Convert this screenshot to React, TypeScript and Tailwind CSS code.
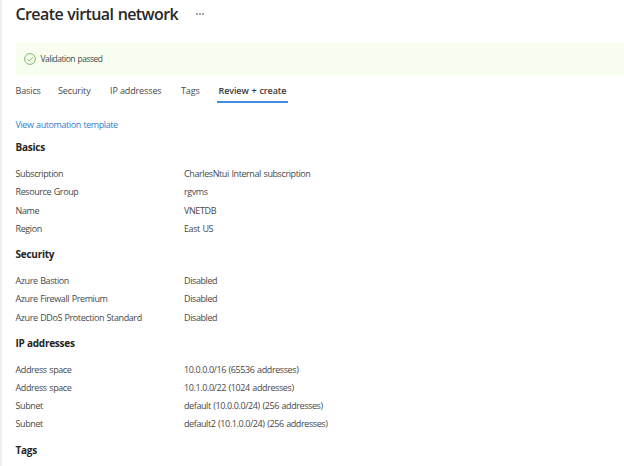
const sections = [
  {
    title: "Basics",
    rows: [
      ["Subscription", "CharlesNtui Internal subscription"],
      ["Resource Group", "rgvms"],
      ["Name", "VNETDB"],
      ["Region", "East US"],
    ],
  },
  {
    title: "Security",
    rows: [
      ["Azure Bastion", "Disabled"],
      ["Azure Firewall Premium", "Disabled"],
      ["Azure DDoS Protection Standard", "Disabled"],
    ],
  },
  {
    title: "IP addresses",
    rows: [
      ["Address space", "10.0.0.0/16 (65536 addresses)"],
      ["Address space", "10.1.0.0/22 (1024 addresses)"],
      ["Subnet", "default (10.0.0.0/24) (256 addresses)"],
      ["Subnet", "default2 (10.1.0.0/24) (256 addresses)"],
    ],
  },
  { title: "Tags", rows: [] },
];

const tabs = [
  { label: "Basics", box: "w-[42.5px]" },
  { label: "Security", box: "w-[52px]" },
  { label: "IP addresses", box: "w-[71px]" },
  { label: "Tags", box: "w-[36px]" },
];

export default function App() {
  return (
    <div className="h-[466px] w-[624px] overflow-hidden border-l-2 border-[#efefef] bg-white pl-[13.5px] font-['Open_Sans','Noto_Sans',sans-serif] text-[9px] text-[#484848]">
      <header className="flex h-[42px] items-start">
        <h1 className="w-[180.5px] whitespace-nowrap pt-[3px] text-[16px] leading-[22px] font-semibold tracking-[-0.6px] [word-spacing:0.8px] text-[#292827]">
          Create virtual network
        </h1>
        <div className="flex gap-[1px] pt-[13px]">
          <i className="size-[2px] bg-[#a5a5a5]" />
          <i className="size-[2px] bg-[#a5a5a5]" />
          <i className="size-[2px] bg-[#a5a5a5]" />
        </div>
      </header>
      <div className="flex h-[33px] items-center bg-[#f8fff0] pl-[8px]">
        <svg viewBox="0 0 12 12" className="size-[12px]" fill="none" stroke="#7db767" strokeWidth="1">
          <circle cx="6" cy="6" r="5.4" />
          <path d="M3.3 6.2 5.2 8 8.9 4.2" />
        </svg>
        <span className="pl-[5px] text-[8.5px] leading-3 tracking-[-0.5px] [word-spacing:0.8px]">Validation passed</span>
      </div>
      <nav className="flex h-[28px] whitespace-nowrap pt-[9px] leading-[14px] tracking-[-0.12px]">
        {tabs.map((t) => (
          <span key={t.label} className={t.box}>
            {t.label}
          </span>
        ))}
        <span className="h-[19px] w-[71px] border-b-2 border-[#3f8fdd] pl-[1.5px] font-semibold tracking-[-0.1px] [word-spacing:0.6px] text-[#3b3a39]">
          Review + create
        </span>
      </nav>
      <div className="h-[27.7px] pt-[15px]">
        <a className="block leading-[14px] tracking-[-0.42px] [word-spacing:0.7px] text-[#2f7fd4]">View automation template</a>
      </div>
      {sections.map((s) => (
        <section key={s.title}>
          <h2 className="flex h-[34.2px] items-center text-[10px] font-bold tracking-[-0.25px] text-[#252423]">
            {s.title}
          </h2>
          {s.rows.map(([label, value], i) => (
            <div
              key={i}
              className="flex h-[18.2px] items-center whitespace-nowrap tracking-[-0.4px] [word-spacing:0.6px]"
            >
              <span className="w-[168.5px]">{label}</span>
              <span>{value}</span>
            </div>
          ))}
        </section>
      ))}
    </div>
  );
}
